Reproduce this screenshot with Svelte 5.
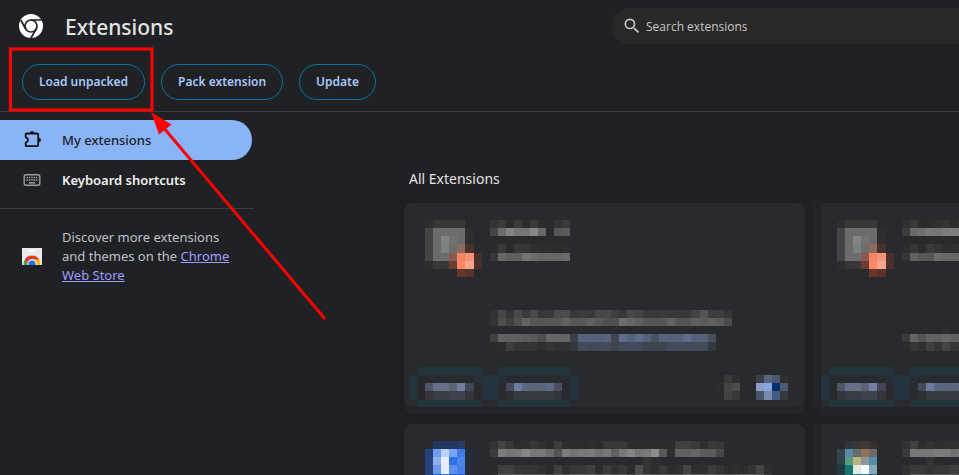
<script>
  const PITCH_X = 8.07;
  const PITCH_Y = 8.16;
  const T = '23343e';
  const teal = (n) => Array(n).fill(T).join(' ');

  // Each run is [column, row, colours]; two digits stand for a grey, "." for an empty cell.
  const badge = [
    [2, 0, '2e 38 38 38 38'],
    [2, 1, '44 6c 6c 6c 6c 2e'],
    [2, 2, '44 6c 808686 72 6a 2e'],
    [2, 3, '44 6c 7c8080 6e 8c6a62 4a302b'],
    [2, 4, '44 6c 6c 8c5850 f78562 f29478 4a302c'],
    [2, 5, '2e 38 38 6b3c31 f98864 f6a68e 4f2f29'],
    [6, 6, '68362a 57332a']
  ];
  const actions = [
    [1, 18, teal(8)],
    [11, 18, teal(9)],
    [0, 19, `${T} . . . . . . . 2a2e36 ${T} ${T} 262e36 . . . . . . . 2a2c34 ${T}`],
    [0, 20, `${T} . 4f5566 667089 667089 596372 6f7f9f 444855 . ${T} ${T} . 444a58 6a7b9e 596680 5b6379 58667c 5b6a85 4a5060 . ${T}`],
    [0, 21, `${T} . 34363b 3a3c45 3a3c45 3f424c 3f424c 34363b . ${T} ${T} . 2e3034 383a42 383a42 383a42 383a42 383a42 32343a . ${T}`],
    [1, 22, teal(8)],
    [11, 22, teal(9)]
  ];
  const cards = [
    {
      inset: 5,
      runs: [
        ...badge,
        [10, 0, '34 3a 2c 3a 2c 3a 2c . 34 3a'],
        [10, 1, '45 6c 84 76 76 88 68 . 56 5a'],
        [10, 3, '2c 38 . 38 36 2f 2e 2e 2c 2e'],
        [10, 4, '38 66 60 5e 72 6b 66 67 66 6a'],
        [10, 11, '32 46 36 4a 3a 48 36 38 4a 4b 38 3c 38 46 48 3e 37 48 44 39 38 3a 38 38 38 42 54 3c 3e 36'],
        [10, 12, '34 4e 40 50 64 56 56 58 58 62 58 56 60 58 50 50 6c 66 5e 56 54 56 62 54 54 5e 5a 60 5a 4a'],
        [10, 14, '40 62 60 60 5c 58 4e 66 66 64 3c4148 58627a 58627a 55617a 58627a 3f4650 5f6d8d 55627c 5f6d8d 55617b 4a5260 58627a 55617b 58627a 5f6d8d 55627c 58627a 48505e'],
        [10, 15, '2b 2d 3e 34 34 34 2e 34 30 30 34383e 434a5a 414857 424a58 434a5a 3d444f 424a58 434a5a 424a58 3e4550 3d444f 3e4550 434a5a 424a58 434a5a 424a58 424a58 34393f'],
        ...actions,
        [39, 19, '38 2e'],
        [38, 20, '2d 44 4c'],
        [39, 21, '42 38'],
        [43, 19, '3a3e46 59657f 4c586f 2f'],
        [43, 20, '8a9dc8 86a6e0 08306f 4a5a74'],
        [43, 21, '4a5468 758bb2 465b82 36393f']
      ]
    },
    {
      inset: 0,
      runs: [
        ...badge,
        [10, 0, '30 38 2c 2c 30 34 2c 34'],
        [10, 1, '3c 6a 70 76 74 7c 80 7c'],
        [10, 3, '2c 36 2c 3a 34 2e 30 2e'],
        [10, 4, '36 62 58 56 6c 68 66 66'],
        [15, 13, '2e'],
        [10, 14, '3a 62 54 62 60 66 60 60'],
        [10, 15, '2c 36 30 40 34 44 36 34'],
        ...actions
      ]
    },
    {
      inset: 5,
      runs: [
        [3, 0, '233660 233660 233660 263c62'],
        [2, 1, '24427c 6d9cf0 bdd2f8 76a5f5 3f7be6 262d3a'],
        [2, 2, '24427c 8fb0f0 e6edfc 2f70e6 4c86ea 262d3a'],
        [2, 3, '24427c 6e98ec e6edfc 5e90ea 4580e6 262d3a'],
        [2, 4, '24427c 1f62dd 3a74e0 1f62dd 1f62dd'],
        [10, 0, '32 44 38 2c 2e 38 30 2c 3c 2c 2c 2c 2e 2c 38 38 38 2c 2c 2c 2c 2c 2c 40 40 3a 2e 38 36'],
        [10, 1, '3c 7c 74 78 86 78 78 6c 54 7c 72 78 7c 70 78 60 78 84 74 78 8c 58 30 60 60 66 5c 5c 48'],
        [29, 2, '34 2e'],
        [10, 3, '2b 40 40 36 36 36 30 2c 40 30 36 38 40 2c 3c 30 38 2c 4c 34 2e 38 2c 30 44 2e 2e 3c 34 2c 2e 2c 34 44 2e'],
        [10, 4, '2d 58 58 5c 58 5a 5a 4c 5c 58 66 66 60 58 60 58 5c 50 60 60 5c 58 5c 58 66 66 60 5c 5c 58 5c 66 60 58 3c']
      ]
    },
    {
      inset: 0,
      runs: [
        [3, 0, '2f3640 383837 423731 36302f'],
        [2, 1, '36434b 5a87a3 626d6b 8f7259 73696c'],
        [2, 2, '2b4349 579a82 b8b57d 8e989c 548ea8'],
        [2, 3, '203c41 19756f dfe8e3 f5faf9 87aab8'],
        [2, 4, '26363c 1a6a76 2a8088 2a8088 2a6a80'],
        [10, 0, '32 40 2e 32 2e 30 30 30'],
        [10, 1, '3a 78 78 78 7c 7c 70 78'],
        [13, 2, '34'],
        [10, 3, '30 3a 38 34 38 38 40 34'],
        [10, 4, '34 5c 5c 58 5c 5c 58 5c']
      ]
    }
  ];

  function cells(runs) {
    return runs.flatMap(([col, row, colours]) =>
      colours.split(' ').flatMap((code, i) => {
        if (code === '.') return [];
        const x = Math.round((col + i) * PITCH_X);
        const y = Math.round(row * PITCH_Y);
        return [{
          x,
          y,
          w: Math.round((col + i + 1) * PITCH_X) - x,
          h: Math.round((row + 1) * PITCH_Y) - y,
          fill: '#' + (code.length === 2 ? code.repeat(3) : code)
        }];
      })
    );
  }
</script>

<div class="page">
  <header>
    <div class="brand">
      <svg class="logo" viewBox="0 0 24 24" aria-hidden="true">
        <circle cx="12" cy="12" r="12" fill="#fff" />
        <g fill="none" stroke="#202124" stroke-width="1.7">
          <circle cx="12" cy="12" r="6" />
          <path d="M12 6H23M6.800 15 1.700 6M17.200 15 11.900 24.200" />
        </g>
      </svg>
      <h1>Extensions</h1>
    </div>
    <label class="search">
      <svg viewBox="0 0 24 24" aria-hidden="true">
        <path fill="#c7c7c7" d="M15.5 14h-.79l-.28-.27A6.47 6.47 0 0 0 16 9.500 6.500 6.500 0 1 0 9.500 16c1.610 0 3.090-.59 4.230-1.570l.27.28v.79l5 4.990L20.490 19l-4.990-5zm-6 0A4.500 4.500 0 1 1 14 9.500 4.490 4.490 0 0 1 9.500 14z" />
      </svg>
      <input type="search" placeholder="Search extensions" aria-label="Search extensions" />
    </label>
  </header>

  <div class="toolbar">
    <button type="button">Load unpacked</button>
    <button type="button">Pack extension</button>
    <button type="button">Update</button>
  </div>

  <div class="body">
    <aside>
      <nav>
        <a class="active" href="#extensions">
          <svg viewBox="0 0 20 20" aria-hidden="true">
            <path d="M4.500 3.500H15Q16.200 3.500 16.200 4.700V15Q16.200 16.200 15 16.200H4.500Q3.700 16.200 3.700 15.400V12.600Q6 11.800 6 10T3.700 7.200V4.300Q3.700 3.500 4.500 3.500Z" fill="none" stroke="#111" stroke-width="1.800" stroke-linejoin="round" />
            <path d="M8 3a2 2 0 0 1 4 0ZM17 7.900a2 2 0 0 1 0 4Z" fill="#111" />
          </svg>
          My extensions
        </a>
        <a href="#shortcuts">
          <svg viewBox="0 0 20 20" aria-hidden="true">
            <rect x="2.200" y="4.700" width="15.600" height="10.600" rx="1.500" fill="none" stroke="#9aa0a6" stroke-width="1.400" />
            <path d="M4.500 7.500h11M4.500 10h11" stroke="#9aa0a6" stroke-width="1.500" stroke-dasharray="1.500 .85" />
            <path d="M6.800 12.800h6.400" stroke="#9aa0a6" stroke-width="1.500" />
          </svg>
          Keyboard shortcuts
        </a>
      </nav>
      <div class="discover">
        <svg viewBox="0 0 20 17" aria-hidden="true">
          <path fill="#e8eaed" d="M0 0h20v17H0z" />
          <rect x="7" y="2" width="6" height="2" rx="1" fill="#fff" />
          <path fill="#34a853" d="M1.600 17a8.500 8.500 0 0 1 1.200-5.500L7 17z" />
          <path fill="#fbbc04" d="M10 11.300h7.200a8.500 8.500 0 0 1 1.200 5.700H10z" />
          <path fill="#e33b2e" d="M2.800 11.500a8.500 8.500 0 0 1 14.500 0H10L6.200 17z" />
          <circle cx="10" cy="16" r="4.700" fill="#fff" />
          <circle cx="10" cy="16" r="3.600" fill="#1a73e8" />
        </svg>
        <p>Discover more extensions and themes on the <a href="#store">Chrome Web Store</a></p>
      </div>
    </aside>

    <main>
      <h2>All Extensions</h2>
      <div class="cards">
        {#each cards as card}
          <article>
            <svg viewBox={`${-card.inset} -17 401 204`} shape-rendering="crispEdges" aria-hidden="true">
              {#each cells(card.runs) as cell}
                <rect x={cell.x} y={cell.y} width={cell.w} height={cell.h} fill={cell.fill} />
              {/each}
            </svg>
          </article>
        {/each}
      </div>
    </main>
  </div>

  <svg class="callout" width="340" height="330" viewBox="0 0 340 330" aria-hidden="true">
    <rect x="10.500" y="49" width="141.500" height="61" fill="none" stroke="#f00" stroke-width="3.200" />
    <path d="M163 127 325 319" stroke="#f00" stroke-width="3" />
    <path d="M151 112 171.500 124.500 159 134.500Z" fill="#f00" />
  </svg>
</div>

<style>
  :global(body) {
    margin: 0;
    background: #202124;
  }
  .page {
    position: relative;
    height: 100vh;
    overflow: hidden;
    display: flex;
    flex-direction: column;
    background: #202124;
    color: #e3e3e3;
    font-family: "Noto Sans", "Open Sans", sans-serif;
  }
  header {
    display: flex;
    padding-top: 8px;
  }
  .brand {
    flex: 0 0 612px;
    box-sizing: border-box;
    padding-left: 19px;
    display: flex;
    align-items: center;
    gap: 22px;
  }
  .logo {
    width: 24px;
    height: 24px;
  }
  h1 {
    margin: 0;
    padding-top: 2px;
    font-size: 21px;
    line-height: 34px;
    font-weight: 500;
  }
  .search {
    flex: 1;
    min-width: 0;
    height: 36px;
    display: flex;
    align-items: center;
    gap: 4px;
    padding-left: 10px;
    border-radius: 18px 0 0 18px;
    background: #282828;
  }
  .search svg {
    flex: none;
    width: 20px;
    height: 20px;
  }
  .search input {
    flex: 1;
    min-width: 0;
    padding: 2px 0 0;
    border: 0;
    outline: 0;
    background: none;
    color: #c7c7c7;
    font: 500 12px/20px "Open Sans", "Noto Sans", sans-serif;
  }
  .search input::placeholder {
    color: #c7c7c7;
    opacity: 1;
  }
  .toolbar {
    display: flex;
    gap: 16px;
    padding: 20px 22px 11px;
    border-bottom: 1px solid #3c3d40;
  }
  button {
    height: 36px;
    padding: 0 16px;
    border: 1px solid #0872a8;
    border-radius: 18px;
    background: none;
    color: #a8c7fa;
    font: 600 12px/20px "Noto Sans", "Open Sans", sans-serif;
  }
  .body {
    flex: 1;
    min-height: 0;
    display: flex;
  }
  aside {
    flex: 0 0 254px;
    padding-top: 8px;
  }
  nav {
    padding-bottom: 8px;
    border-bottom: 1px solid #3c3d40;
  }
  nav a {
    display: flex;
    align-items: center;
    gap: 20px;
    height: 40px;
    margin-right: 2px;
    padding-left: 22px;
    border-radius: 0 20px 20px 0;
    color: #f1f1f1;
    font-size: 13px;
    font-weight: 600;
    text-decoration: none;
  }
  nav a.active {
    background: #8ab4f8;
    color: #202124;
    font-weight: 500;
  }
  nav svg {
    width: 20px;
    height: 20px;
  }
  .discover {
    display: flex;
    align-items: center;
    gap: 20px;
    padding: 19px 10px 0 22px;
  }
  .discover svg {
    flex: none;
    width: 20px;
    height: 17px;
  }
  .discover p {
    margin: 0;
    color: #bdc1c6;
    font-size: 13px;
    line-height: 19px;
  }
  .discover a {
    color: #9e9eff;
  }
  main {
    flex: 1;
    min-width: 0;
    padding: 57px 0 0 150px;
    overflow: hidden;
  }
  h2 {
    margin: 0 0 14px 5px;
    font-size: 14px;
    line-height: 20px;
    font-weight: 400;
  }
  .cards {
    display: grid;
    grid-template-columns: repeat(2, 401px);
    gap: 17px 16px;
  }
  article {
    height: 204px;
    border-radius: 8px;
    background: #292a2d;
    box-shadow: 0 8px 0 #232427, 0 0 8px #1b1c1e;
  }
  article:nth-child(even) {
    border-radius: 0;
    box-shadow: 0 8px 0 #232427, -8px 0 0 #232427, -16px 0 0 #1f2022;
  }
  article svg {
    display: block;
    width: 401px;
    height: 204px;
  }
  .callout {
    position: absolute;
    top: 0;
    left: 0;
    pointer-events: none;
  }
</style>
